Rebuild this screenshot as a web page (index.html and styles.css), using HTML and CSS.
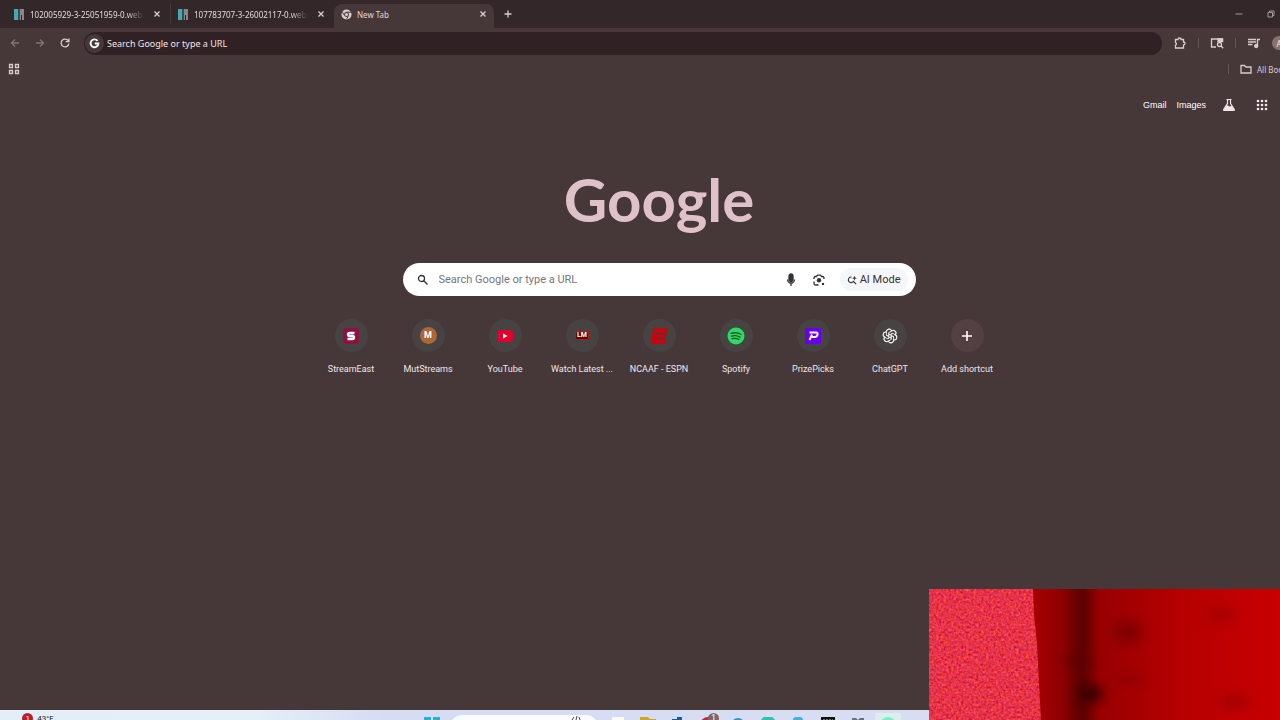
FILE: index.html
```html
<!DOCTYPE html>
<html lang="en">

<head>
    <meta charset="UTF-8">
    <meta name="viewport" content="width=device-width, initial-scale=1.0">
    <title>New Tab</title>
    <link rel="stylesheet" href="styles.css">
</head>

<body>
    <div class="browser">
        <header>
            <div class="tab-strip">
                <div class="tab">
                    <svg class="favicon" viewBox="0 0 11 11"><path fill="#48a9ad" d="M0 0h4v11H0z"/><path fill="#27545c" d="M4 0h2v11H4z"/><path fill="#8b8488" d="M6 0h4v11H8V6H7v5H6z"/></svg>
                    <span class="tab-title faded">102005929-3-25051959-0.webp</span>
                    <button class="tab-close" aria-label="Close tab"><svg viewBox="0 0 12 12"><path d="M3.500 3.500l5 5m0-5l-5 5"/></svg></button>
                </div>
                <div class="tab divided">
                    <svg class="favicon" viewBox="0 0 11 11"><path fill="#48a9ad" d="M0 0h4v11H0z"/><path fill="#27545c" d="M4 0h2v11H4z"/><path fill="#8b8488" d="M6 0h4v11H8V6H7v5H6z"/></svg>
                    <span class="tab-title faded">107783707-3-26002117-0.webp</span>
                    <button class="tab-close" aria-label="Close tab"><svg viewBox="0 0 12 12"><path d="M3.500 3.500l5 5m0-5l-5 5"/></svg></button>
                </div>
                <div class="tab active">
                    <svg class="favicon" viewBox="0 0 12 12"><circle cx="6" cy="6" r="5.500" fill="#d9cdcf"/><circle cx="6" cy="6" r="2.700" fill="#463739"/><circle cx="6" cy="6" r="1.700" fill="#d9cdcf"/><path d="M6 3.500h5M3.800 7.200L1.400 3.200M8.200 7.200L5.800 11.400" stroke="#463739" fill="none"/></svg>
                    <span class="tab-title">New Tab</span>
                    <button class="tab-close" aria-label="Close tab"><svg viewBox="0 0 12 12"><path d="M3.500 3.500l5 5m0-5l-5 5"/></svg></button>
                </div>
                <button class="new-tab" aria-label="New tab"><svg viewBox="0 0 12 12"><path d="M6 2.500v7M2.500 6h7"/></svg></button>
                <div class="window-buttons">
                    <button aria-label="Minimize"><svg viewBox="0 0 12 12"><path d="M2.500 6h7"/></svg></button>
                    <button aria-label="Restore"><svg viewBox="0 0 12 12"><path d="M3 4.500h4.500V9H3zM4.500 4.500V3H9v4.500H7.500"/></svg></button>
                </div>
            </div>

            <div class="toolbar">
                <button class="dim" aria-label="Back"><svg viewBox="0 0 12 12"><path d="M10 6H2.500M6 2.500L2.500 6L6 9.500"/></svg></button>
                <button class="dim" aria-label="Forward"><svg viewBox="0 0 12 12"><path d="M2 6h7.500M6 2.500L9.500 6L6 9.500"/></svg></button>
                <button aria-label="Reload"><svg viewBox="0 0 12 12"><path d="M9.500 4.200A3.900 3.900 0 1 0 9.900 6.500M9.900 1.500v3.200H6.700"/></svg></button>
                <div class="omnibox">
                    <span class="site-icon"><svg viewBox="0 0 14 14"><path d="M10.300 4.200A4.200 4.200 0 1 0 11.200 7H7.300"/></svg></span>
                    <input type="text" aria-label="Address bar" placeholder="Search Google or type a URL">
                </div>
                <div class="extensions">
                    <button aria-label="Extensions"><svg viewBox="0 0 14 14"><path d="M2.500 3.500H5a1.500 1.500 0 0 1 3 0h2.500V6a1.500 1.500 0 0 1 0 3v3h-8V9a1.300 1.300 0 0 0 0-2.500z"/></svg></button>
                    <span class="separator"></span>
                    <button aria-label="Search side panel"><svg viewBox="0 0 14 14"><path d="M6 11H1.500V3h11v3"/><path d="M8 3h4.500v2.500H8z" fill="#d9cdcf"/><circle cx="9.500" cy="8.500" r="2"/><path d="M11 10l2.200 2.200"/></svg></button>
                    <span class="separator"></span>
                    <button aria-label="Media controls"><svg viewBox="0 0 14 14"><path d="M1 3.500h8M1 6h8M1 8.500h4.500M10.500 10V3.500H13"/><circle cx="9.200" cy="10" r="1.500" fill="#d9cdcf"/></svg></button>
                    <button class="profile" aria-label="Profile">A</button>
                </div>
            </div>

            <div class="bookmarks">
                <button aria-label="Apps"><svg viewBox="0 0 12 12"><path d="M1.500 1.500h3v3h-3zM7.500 1.500h3v3h-3zM1.500 7.500h3v3h-3zM7.500 7.500h3v3h-3z"/></svg></button>
                <div class="all-bookmarks">
                    <span class="separator"></span>
                    <button><svg viewBox="0 0 12 12"><path d="M1 2.500h3.500L6 4h5v6H1z"/></svg>All Bookmarks</button>
                </div>
            </div>
        </header>

        <main>
            <nav class="top-links">
                <a href="#">Gmail</a>
                <a href="#">Images</a>
                <a href="#" class="labs" aria-label="Search Labs"><svg viewBox="0 0 14 14"><path d="M4.500 1.500h5M5.500 1.500v4L1.800 11.200q-.6 1.300.8 1.300h8.800q1.400 0 .8-1.300L8.500 5.500v-4" fill="none" stroke="#f1e7e8" stroke-width="1.200"/><path d="M4 7.500L1.500 12.500h11L9.800 7.500q-2 1.500-3 .5t-2.800-.5z" fill="#f1e7e8"/></svg></a>
                <a href="#" class="apps" aria-label="Google apps"><svg viewBox="0 0 14 14"><path d="M3 3h.01M7 3h.01M11 3h.01M3 7h.01M7 7h.01M11 7h.01M3 11h.01M7 11h.01M11 11h.01" stroke="#f1e7e8" stroke-width="2.700" stroke-linecap="round"/></svg></a>
            </nav>

            <h1 class="logo">Google</h1>

            <form class="search">
                <svg class="search-icon" viewBox="0 0 14 14"><circle cx="5.500" cy="5.500" r="3"/><path d="M7.800 7.800l3.700 3.700"/></svg>
                <input type="text" aria-label="Search" placeholder="Search Google or type a URL">
                <button type="button" aria-label="Voice search"><svg viewBox="0 0 14 14"><rect x="5" y="1" width="4" height="7.500" rx="2" fill="#333"/><path d="M3.500 6.500a3.500 3.500 0 0 0 7 0M7 10.200V13"/></svg></button>
                <button type="button" aria-label="Search by image"><svg viewBox="0 0 14 14"><path d="M2 6V5q0-1.500 1.500-1.500h1l1-1.300h3l1 1.300h1Q12 3.500 12 5v1M2 8.500v2Q2 12 3.500 12h3"/><circle cx="7" cy="7.300" r="2.200" fill="#333" stroke="none"/><circle cx="11" cy="11" r="1.200" fill="#333" stroke="none"/></svg></button>
                <button type="button" class="ai-mode"><svg viewBox="0 0 12 12"><path d="M5.500 2.500A3.300 3.300 0 1 0 8 7M7.500 7.500l3.500 3.500"/><path d="M9 .8l.8 2.200 2.200.8-2.200.8L9 6.800l-.8-2.200L6 3.800 8.200 3z" fill="#333" stroke="none"/></svg>AI Mode</button>
            </form>

            <nav class="shortcuts">
                <a href="#">
                    <span class="tile"><svg viewBox="0 0 18 18"><rect x="1" y="1" width="16" height="16" rx="3" fill="#8e123f"/><path d="M12.500 6h-5Q6 6 6 7.500T7.500 9h3q1.500 0 1.500 1.500T10.500 12h-5" fill="none" stroke="#fff" stroke-width="2.300"/></svg></span>
                    <span class="label">StreamEast</span>
                </a>
                <a href="#">
                    <span class="tile"><span class="letter">M</span></span>
                    <span class="label">MutStreams</span>
                </a>
                <a href="#">
                    <span class="tile"><svg viewBox="0 0 18 18"><rect x="1" y="3" width="16" height="12" rx="3" fill="#e1002d"/><path d="M7 6.500v5L11.500 9z" fill="#fff"/></svg></span>
                    <span class="label">YouTube</span>
                </a>
                <a href="#">
                    <span class="tile"><span class="lm">LM</span></span>
                    <span class="label">Watch Latest ...</span>
                </a>
                <a href="#">
                    <span class="tile"><svg viewBox="0 0 18 18"><path fill="#c20710" d="M3 1h15l-.7 4.300H2.300zM2 6.300h14.500l-.5 4H7.500l-.2 1.400h8.600L15.200 17H.5z"/><path d="M7.500 6.500h9M7 11h8.500" stroke="#8e171b" stroke-width=".8"/></svg></span>
                    <span class="label">NCAAF - ESPN</span>
                </a>
                <a href="#">
                    <span class="tile"><svg viewBox="0 0 18 18"><circle cx="9" cy="9" r="8.500" fill="#2bdc63"/><path d="M4 6.300q5.500-1.500 10 1M4.500 9.100q4.800-1.300 8.500 1M5 11.700q4-1 7 .8" fill="none" stroke="#26472f" stroke-width="1.300" stroke-linecap="round"/></svg></span>
                    <span class="label">Spotify</span>
                </a>
                <a href="#">
                    <span class="tile"><svg viewBox="0 0 18 18"><path fill="#6700e8" d="M1 1h16v16H1z"/><path d="M5.500 5.500H12q2 0 1.500 2.200T10.500 10H8M8 7.500L5.500 13" fill="none" stroke="#fff" stroke-width="1.900"/></svg></span>
                    <span class="label">PrizePicks</span>
                </a>
                <a href="#">
                    <span class="tile"><svg viewBox="-10 -10 20 20" fill="none" stroke="#f0eaea">
                        <defs><path id="petal" d="M-3.900-3.200V-4A3 3 0 0 1 1.900-5.600M-1.300-2.300V-3.900L2.200-5.900A3 3 0 0 1 6.200-2M-1.300-2.300L3.900.7"/></defs>
                        <use href="#petal"/><use href="#petal" transform="rotate(60)"/><use href="#petal" transform="rotate(120)"/><use href="#petal" transform="rotate(180)"/><use href="#petal" transform="rotate(240)"/><use href="#petal" transform="rotate(300)"/>
                    </svg></span>
                    <span class="label">ChatGPT</span>
                </a>
                <button>
                    <span class="tile plain"><svg viewBox="0 0 18 18"><path d="M9 4v10M4 9h10" stroke="#fff" stroke-width="1.600"/></svg></span>
                    <span class="label">Add shortcut</span>
                </button>
            </nav>
        </main>
    </div>

    <footer class="taskbar">
        <button class="weather"><span class="count">1</span>43°F</button>
        <div class="task-icons">
            <svg viewBox="0 0 16 16"><path fill="#2eaed0" d="M0 0h7v7H0zM9 0h7v7H9zM0 9h7v7H0zM9 9h7v7H9z"/></svg>
            <div class="task-search"><svg viewBox="0 0 16 16"><path d="M4 5l2-3M8 5l1-4M12 5l-1-3" stroke="#444" fill="none"/></svg></div>
            <svg viewBox="0 0 16 16"><rect x="2" width="12" height="16" rx="1" fill="#f9fafc"/></svg>
            <svg viewBox="0 0 16 16"><path fill="#cda72b" d="M0 0h8l2 2h6v14H0z"/></svg>
            <svg viewBox="0 0 16 16"><path fill="#1c5c94" d="M2 2h5V0h5v16H2z"/></svg>
            <span class="badged"><svg viewBox="0 0 16 16"><circle cx="8" cy="8" r="8" fill="#c52a3c"/></svg><span class="badge">1</span></span>
            <svg viewBox="0 0 16 16"><circle cx="8" cy="8" r="7" fill="#3296bd"/></svg>
            <svg viewBox="0 0 16 16"><circle cx="8" cy="7" r="8" fill="#38bdb1"/></svg>
            <svg viewBox="0 0 16 16"><rect x="3" width="10" height="14" rx="3" fill="#4bafd4"/></svg>
            <svg viewBox="0 0 16 16"><path fill="#111" d="M1 0h14v16H1z"/><path d="M3 3h10" stroke="#ddd" stroke-dasharray="2 1"/></svg>
            <svg viewBox="0 0 16 16"><path fill="#69717f" d="M2 1h4l2 2 2-2h4v14H2z"/></svg>
            <span class="running"><svg viewBox="0 0 16 16"><circle cx="8" cy="8" r="8" fill="#7defc0"/></svg></span>
        </div>
    </footer>

    <!-- webcam preview floating over the desktop -->
    <div class="camera">
        <svg viewBox="0 0 351 131" preserveAspectRatio="none">
            <defs>
                <linearGradient id="curtain">
                    <stop offset="0" stop-color="#a80003"/>
                    <stop offset=".13" stop-color="#900002"/>
                    <stop offset=".2" stop-color="#600000"/>
                    <stop offset=".22" stop-color="#600000"/>
                    <stop offset=".28" stop-color="#980001"/>
                    <stop offset=".6" stop-color="#b60001"/>
                    <stop offset="1" stop-color="#c80001"/>
                </linearGradient>
                <filter id="grain" x="0" y="0" width="100%" height="100%" color-interpolation-filters="sRGB">
                    <feTurbulence type="fractalNoise" baseFrequency=".4" numOctaves="2" seed="4"/>
                    <feColorMatrix values=".4 0 0 0 .7  .2 .4 0 0 -.1  0 0 .6 0 -.02  0 0 0 0 1"/>
                    <feComposite in2="SourceGraphic" operator="in"/>
                </filter>
                <filter id="soft" x="-100%" y="-100%" width="300%" height="300%"><feGaussianBlur stdDeviation="6"/></filter>
            </defs>
            <rect x="100" width="251" height="131" fill="url(#curtain)"/>
            <g fill="#500000" filter="url(#soft)">
                <ellipse cx="162" cy="105" rx="12" ry="8" fill="#300000"/>
                <ellipse cx="199" cy="43" rx="15" ry="12" opacity=".4"/>
                <ellipse cx="147" cy="73" rx="22" ry="3" opacity=".5"/>
                <ellipse cx="202" cy="90" rx="15" ry="4" opacity=".3"/>
                <ellipse cx="306" cy="112" rx="15" ry="6" opacity=".3"/>
                <ellipse cx="291" cy="25" rx="15" ry="8" opacity=".2"/>
            </g>
            <path d="M0 0h104l1 25 3 30 2 40 2 36H0z" fill="#e92a43" filter="url(#grain)"/>
        </svg>
    </div>
</body>

</html>
```

FILE: styles.css
```css
* {
    box-sizing: border-box;
}

body {
    margin: 0;
    height: 100vh;
    overflow: hidden;
    position: relative;
    background-color: #463739;
    font-family: Roboto, "Noto Sans", sans-serif;
    font-size: 9px;
    color: #f1e7e8;
}

button {
    display: flex;
    align-items: center;
    justify-content: center;
    padding: 0;
    border: none;
    background: none;
    color: inherit;
    font: inherit;
    flex-shrink: 0;
}

input {
    flex: 1;
    min-width: 0;
    padding: 0;
    border: none;
    outline: none;
    background: none;
    font: inherit;
}

a {
    color: inherit;
    text-decoration: none;
}

svg {
    display: block;
    flex-shrink: 0;
}

/* the window runs past the right edge of the screen */
.browser {
    height: calc(100vh - 10px);
    margin-right: -38px;
}

header {
    font-family: "Noto Sans", sans-serif;
}

header button svg {
    width: 12px;
    height: 12px;
    fill: none;
    stroke: #d9cdcf;
    stroke-width: 1.3;
}

/* Tabs */
.tab-strip {
    display: flex;
    align-items: center;
    height: 28px;
    padding-left: 6px;
    background-color: #33272a;
    font-size: 8px;
}

.tab {
    display: flex;
    align-items: center;
    width: 164px;
    height: 20px;
    padding: 0 7px 0 8px;
    color: #e4d9db;
}

.divided {
    padding-left: 7px;
    border-left: 1px solid #49393c;
}

.tab.active {
    width: 160px;
    height: 24px;
    align-self: flex-end;
    padding: 0 5px 4px 7px;
    border-radius: 8px 8px 0 0;
    background-color: #463739;
}

.favicon {
    width: 11px;
    height: 11px;
    margin-right: 5px;
}

.tab-title {
    flex: 1;
    overflow: hidden;
    white-space: nowrap;
}

.faded {
    -webkit-mask-image: linear-gradient(90deg, #000 85%, transparent);
    mask-image: linear-gradient(90deg, #000 85%, transparent);
}

.tab-close {
    margin-left: 7px;
}

.new-tab {
    margin-left: 8px;
}

.window-buttons {
    display: flex;
    gap: 20px;
    margin-left: auto;
    margin-right: 41px;
}

.window-buttons svg {
    stroke: #a3999b;
    stroke-width: 1;
}

/* Toolbar */
.toolbar {
    display: flex;
    align-items: center;
    height: 30px;
    padding-left: 9px;
    gap: 13px;
}

.toolbar .dim {
    opacity: 0.4;
}

.omnibox {
    display: flex;
    align-items: center;
    flex: 1;
    height: 23px;
    padding-left: 1px;
    border-radius: 12px;
    background-color: #302125;
}

.omnibox input {
    color: #f1e7e8;
}

.omnibox input::placeholder {
    color: #f1e7e8;
    opacity: 1;
}

.site-icon {
    width: 19px;
    height: 19px;
    margin-right: 3px;
    padding: 3px;
    border-radius: 50%;
    background-color: #463739;
}

.site-icon svg {
    fill: none;
    stroke: #fff;
    stroke-width: 2;
}

.extensions {
    display: flex;
    align-items: center;
    gap: 11px;
    width: 145px;
    margin-left: -2px;
}

.extensions svg {
    width: 14px;
    height: 14px;
}

.separator {
    width: 1px;
    height: 10px;
    background-color: #65565a;
}

.profile {
    width: 14px;
    height: 14px;
    border-radius: 50%;
    background-color: #8a716c;
    font-size: 8px;
}

.bookmarks {
    display: flex;
    align-items: center;
    justify-content: space-between;
    height: 22px;
    padding-left: 8px;
    color: #d9cdcf;
}

.all-bookmarks {
    display: flex;
    align-items: center;
    gap: 11px;
    width: 90px;
    white-space: nowrap;
    font-size: 8px;
}

.all-bookmarks svg {
    margin-right: 5px;
}

/* New tab page */
main {
    display: flex;
    flex-direction: column;
    align-items: center;
}

.top-links {
    display: flex;
    align-items: center;
    align-self: flex-end;
    height: 50px;
    padding-right: 49px;
    font-family: "Liberation Sans", sans-serif;
    color: #fff;
    gap: 10px;
}

.top-links svg {
    width: 14px;
    height: 14px;
}

.labs {
    margin: 0 9px 0 6px;
}

.logo {
    margin: 33px 0 0;
    font-family: Lato, sans-serif;
    font-size: 60px;
    font-weight: 700;
    line-height: 72px;
    color: #dfc1c9;
}

.search {
    display: flex;
    align-items: center;
    width: 513px;
    height: 33px;
    margin-top: 28px;
    padding: 0 8px 0 13px;
    border-radius: 17px;
    background-color: #fff;
    font-size: 11px;
    color: #333;
}

.search svg {
    width: 14px;
    height: 14px;
    fill: none;
    stroke: #333;
    stroke-width: 1.3;
}

.search input {
    margin-left: 9px;
}

.search input::placeholder {
    color: #73777b;
    opacity: 1;
}

.search button {
    margin-right: 14px;
}

.search .ai-mode {
    height: 23px;
    margin: 0;
    padding: 0 7px;
    gap: 3px;
    border-radius: 12px;
    background-color: #f5f6f8;
}

.ai-mode svg {
    width: 10px;
    height: 10px;
}

.shortcuts {
    display: flex;
    margin-top: 23px;
}

.shortcuts > * {
    display: flex;
    flex-direction: column;
    align-items: center;
    gap: 11px;
    width: 77px;
}

.tile {
    display: flex;
    align-items: center;
    justify-content: center;
    width: 33px;
    height: 33px;
    border-radius: 50%;
    background-color: #464342;
}

.plain {
    background-color: #524042;
}

.tile svg {
    width: 18px;
    height: 18px;
}

.letter {
    width: 17px;
    border-radius: 50%;
    background-color: #ae6636;
    line-height: 17px;
    text-align: center;
    font-weight: 700;
    color: #fff;
}

.lm {
    padding: 0 1px;
    border: 1px solid #b51a18;
    border-radius: 2px;
    background-color: #49100f;
    font-size: 7px;
    font-weight: 700;
    line-height: 7px;
    color: #fff;
}

.label {
    line-height: 13px;
    white-space: nowrap;
}

/* Taskbar */
.taskbar {
    display: flex;
    height: 32px;
    padding: 3px 0 0 20px;
    background: linear-gradient(90deg, #e4eef8, #e4eff8 20%, #d6dcf4 30%, #d8def0);
    color: #222;
}

.weather {
    align-self: flex-start;
    gap: 4px;
    width: 36px;
    font-size: 8px;
}

.count {
    width: 11px;
    border-radius: 50%;
    background-color: #b3222d;
    line-height: 11px;
    color: #fff;
}

.task-icons {
    display: flex;
    gap: 14px;
    margin-left: 368px;
    padding-top: 4px;
}

.task-icons svg {
    width: 16px;
    height: 16px;
}

.task-search {
    display: flex;
    justify-content: flex-end;
    width: 148px;
    height: 24px;
    margin: -2px -2px 0 -4px;
    padding-right: 14px;
    border-radius: 12px;
    background-color: #fafbfe;
}

.badged {
    position: relative;
}

.badge {
    position: absolute;
    top: -4px;
    right: -3px;
    width: 11px;
    border-radius: 50%;
    background-color: #79676b;
    line-height: 11px;
    text-align: center;
    color: #fff;
}

.running {
    height: 26px;
    margin: -4px -5px 0;
    padding: 4px 5px;
    background-color: #dcefee;
}

.camera {
    position: absolute;
    right: 0;
    bottom: 0;
    width: 351px;
    height: 131px;
    overflow: hidden;
}

.camera svg {
    width: 100%;
    height: 100%;
}
```
